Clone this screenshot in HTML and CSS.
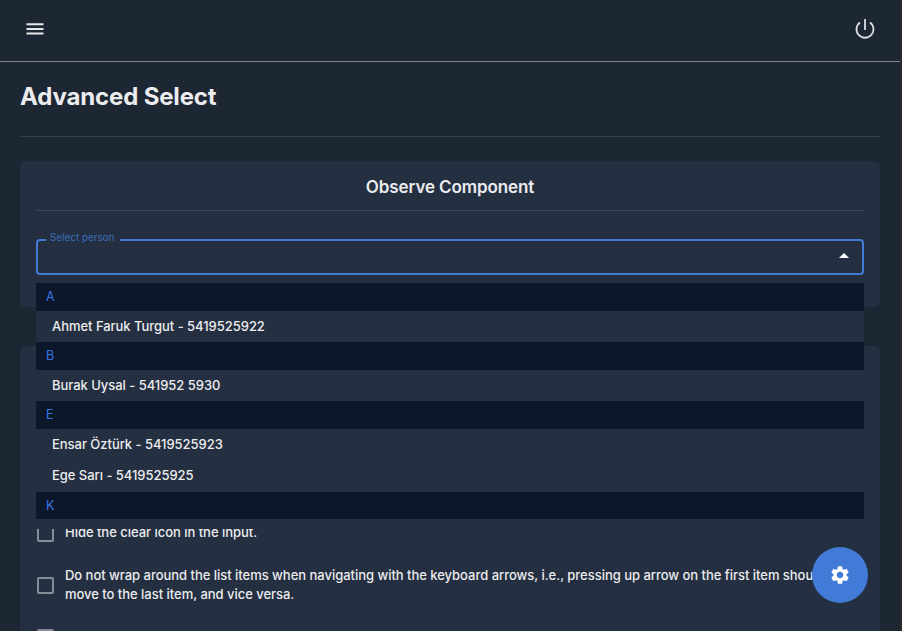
FILE: index.html
```html
<!DOCTYPE html>
<html lang="en">
<head>
<meta charset="utf-8">
<title>Advanced Select</title>
<link rel="stylesheet" href="styles.css">
</head>
<body>
<div class="app">
  <header class="topbar">
    <svg class="menu-icon" viewBox="0 0 20 24"><path d="M1.5 7.2h17M1.5 12h17M1.5 16.5h17"/></svg>
    <svg class="power-icon" viewBox="0 0 24 24"><path d="M12 2v11"/><path d="M7 5.4a8.5 8.5 0 1 0 10 0"/></svg>
  </header>
  <main class="content">
    <h1 class="title">Advanced Select</h1>
    <section class="card observe">
      <h2 class="card-title">Observe Component</h2>
      <div class="select">
        <span class="select-label">Select person</span>
        <svg class="arrow" viewBox="0 0 10 5"><path d="M0 5l5-5 5 5z"/></svg>
        <ul class="popup">
          <li class="group">A</li>
          <li class="option">Ahmet Faruk Turgut - 5419525922</li>
          <li class="group">B</li>
          <li class="option">Burak Uysal - 541952 5930</li>
          <li class="group">E</li>
          <li class="option">Ensar Öztürk - 5419525923</li>
          <li class="option">Ege Sarı - 5419525925</li>
          <li class="group last">K</li>
        </ul>
      </div>
    </section>
    <section class="card options">
      <label class="check single"><span class="box"></span><span class="text">Hide the clear icon in the input.</span></label>
      <label class="check"><span class="box"></span><span class="text">Do not wrap around the list items when navigating with the keyboard arrows, i.e., pressing up arrow on the first item should<br>move to the last item, and vice versa.</span></label>
      <label class="check"><span class="box"></span></label>
    </section>
  </main>
  <button class="fab" aria-label="Settings"><svg viewBox="0 0 24 24"><path d="M19.14 12.94c.04-.3.06-.61.06-.94 0-.32-.02-.64-.07-.94l2.03-1.58c.18-.14.23-.41.12-.61l-1.92-3.32c-.12-.22-.37-.29-.59-.22l-2.39.96c-.5-.38-1.03-.7-1.62-.94l-.36-2.54c-.04-.24-.24-.41-.48-.41h-3.84c-.24 0-.43.17-.47.41l-.36 2.54c-.59.24-1.13.57-1.62.94l-2.39-.96c-.22-.08-.47 0-.59.22L2.74 8.87c-.12.21-.08.47.12.61l2.03 1.58c-.05.3-.09.63-.09.94s.02.64.07.94l-2.03 1.58c-.18.14-.23.41-.12.61l1.92 3.32c.12.22.37.29.59.22l2.39-.96c.5.38 1.03.7 1.62.94l.36 2.54c.05.24.24.41.48.41h3.84c.24 0 .44-.17.47-.41l.36-2.54c.59-.24 1.13-.56 1.62-.94l2.39.96c.22.08.47 0 .59-.22l1.92-3.32c.12-.22.07-.47-.12-.61l-2.01-1.58zM12 15.6c-1.98 0-3.6-1.62-3.6-3.6s1.62-3.6 3.6-3.6 3.6 1.62 3.6 3.6-1.62 3.6-3.6 3.6z"/></svg></button>
</div>
</body>
</html>
```
FILE: styles.css
```css
* { box-sizing: border-box; }
body {
  margin: 0;
  height: 631px;
  overflow: hidden;
  background: #2b2a2b;
  color: #ececee;
  font-family: Inter, "Liberation Sans", sans-serif;
}
.app {
  width: 900px;
  height: 631px;
  overflow: hidden;
  background: #1c2733;
}
.topbar {
  display: flex;
  align-items: center;
  justify-content: space-between;
  height: 62px;
  padding: 0 23px 3px 25px;
  border-bottom: 1px solid #84878a;
}
.menu-icon {
  width: 20px;
  height: 24px;
  fill: none;
  stroke: #e6e8ea;
  stroke-width: 1.9;
}
.power-icon {
  width: 24px;
  height: 24px;
  fill: none;
  stroke: #dcdedf;
  stroke-width: 1.8;
}
.content { padding: 0 20px; }
.title {
  height: 75px;
  margin: 0 0 24px;
  padding-top: 19px;
  border-bottom: 1px solid #36414d;
  font-size: 24px;
  line-height: 32px;
  font-weight: 650;
  letter-spacing: -0.15px;
}
.card { padding: 0 16px; border-radius: 6px; background: #243042; }
.observe { height: 146px; margin-bottom: 39px; }
.card-title {
  height: 50px;
  margin: 0 0 28px;
  border-bottom: 1px solid #3c4755;
  text-align: center;
  font-size: 17px;
  line-height: 53px;
  font-weight: 600;
  letter-spacing: -0.1px;
}
.select {
  position: relative;
  display: flex;
  align-items: center;
  justify-content: flex-end;
  height: 36px;
  padding-right: 13px;
  border: 2px solid #417ad7;
  border-radius: 4px;
}
.select-label {
  position: absolute;
  top: -10px;
  left: 8px;
  padding: 0 6px 0 4px;
  background: #243042;
  color: #3b6bba;
  font-size: 9.9px;
  line-height: 13px;
}
.arrow { width: 10px; height: 5px; margin-bottom: 3px; fill: #fff; }
.popup {
  position: absolute;
  z-index: 2;
  top: 42px;
  left: -2px;
  right: -2px;
  height: 246px;
  margin: 0;
  padding: 0;
  list-style: none;
  overflow: hidden;
  background: #243042;
  font-size: 13px;
}
.group {
  height: 28px;
  padding-left: 10px;
  background: #0c1729;
  color: #3a76e6;
  font-size: 12.5px;
  line-height: 28px;
}
.last { height: 27px; margin-top: 1px; }
.option {
  height: 31px;
  padding-left: 16px;
  line-height: 31px;
  font-weight: 500;
  letter-spacing: -0.035px;
}
.options { height: 400px; padding-top: 161px; }
.check {
  display: flex;
  align-items: center;
  gap: 11px;
  height: 52px;
  font-size: 13px;
  line-height: 19px;
  font-weight: 500;
  letter-spacing: -0.028px;
  white-space: nowrap;
}
.single .text { margin-bottom: 2px; }
.box {
  flex: none;
  width: 17px;
  height: 17px;
  margin-left: 1px;
  border: 2px solid #858c96;
  border-radius: 2px;
}
.fab {
  position: absolute;
  z-index: 3;
  top: 547px;
  left: 812px;
  display: grid;
  place-items: center;
  width: 56px;
  height: 56px;
  padding: 0;
  border: 0;
  border-radius: 50%;
  background: #417ad7;
}
.fab svg { width: 22px; height: 22px; fill: #fff; }
```
